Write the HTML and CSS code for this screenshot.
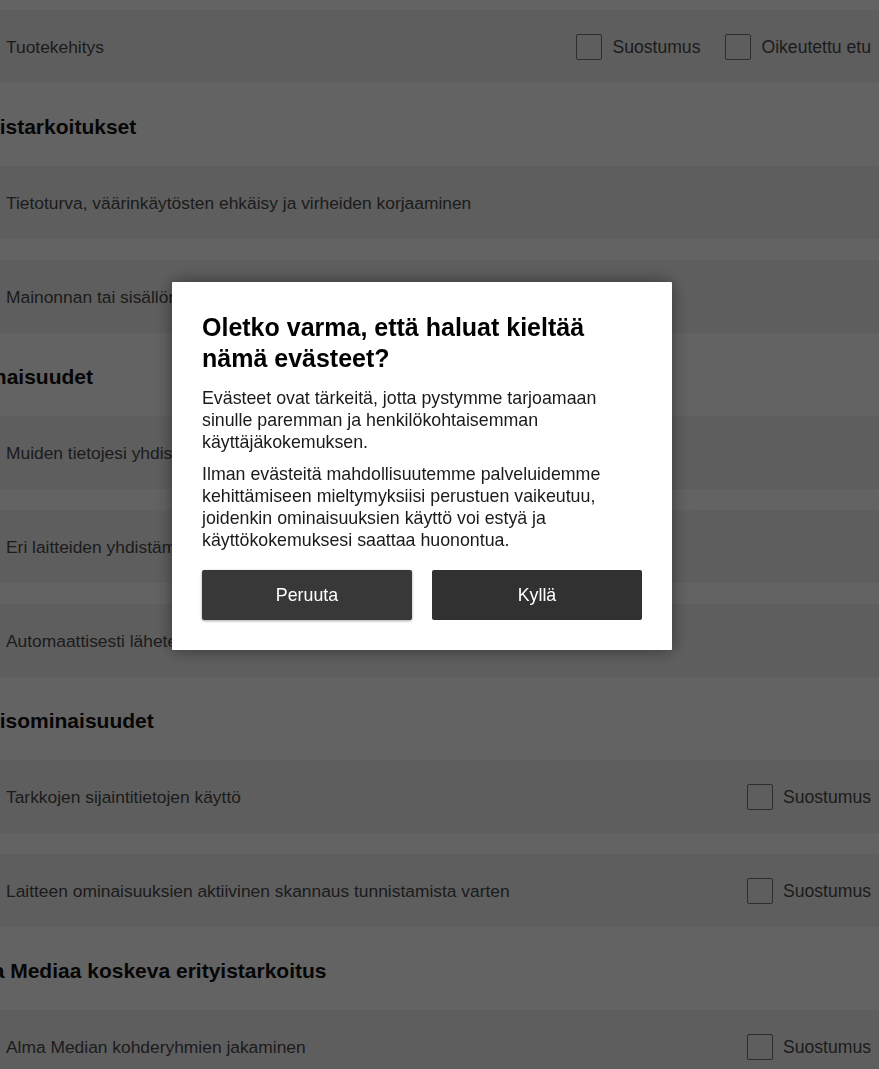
FILE: index.html
```html
<!DOCTYPE html>
<html lang="fi">
<head>
<meta charset="utf-8">
<title>Evästeasetukset</title>
<link rel="stylesheet" href="styles.css">
</head>
<body>
<main class="page">
  <section class="group first">
    <div class="row">
      <span class="row-text">Tuotekehitys</span>
      <div class="choices">
        <label class="choice"><span class="box"></span>Suostumus</label>
        <label class="choice"><span class="box"></span>Oikeutettu etu</label>
      </div>
    </div>
  </section>

  <h2 class="heading">Erityistarkoitukset</h2>
  <section class="group">
    <div class="row"><span class="row-text">Tietoturva, väärinkäytösten ehkäisy ja virheiden korjaaminen</span></div>
    <div class="row"><span class="row-text">Mainonnan tai sisällön teknistä toimittamista ja esittämistä</span></div>
  </section>

  <h2 class="heading">Ominaisuudet</h2>
  <section class="group">
    <div class="row"><span class="row-text">Muiden tietojesi yhdistäminen ja yhteensovittaminen</span></div>
    <div class="row"><span class="row-text">Eri laitteiden yhdistäminen</span></div>
    <div class="row"><span class="row-text">Automaattisesti lähetettyjen laitteen ominaisuuksien tunnistaminen</span></div>
  </section>

  <h2 class="heading">Erityisominaisuudet</h2>
  <section class="group">
    <div class="row">
      <span class="row-text">Tarkkojen sijaintitietojen käyttö</span>
      <div class="choices"><label class="choice"><span class="box"></span>Suostumus</label></div>
    </div>
    <div class="row">
      <span class="row-text">Laitteen ominaisuuksien aktiivinen skannaus tunnistamista varten</span>
      <div class="choices"><label class="choice"><span class="box"></span>Suostumus</label></div>
    </div>
  </section>

  <h2 class="heading">Alma Mediaa koskeva erityistarkoitus</h2>
  <section class="group">
    <div class="row">
      <span class="row-text">Alma Median kohderyhmien jakaminen</span>
      <div class="choices"><label class="choice"><span class="box"></span>Suostumus</label></div>
    </div>
  </section>
</main>

<div class="overlay">
  <div class="dialog" role="dialog">
    <h1 class="dialog-title">Oletko varma, että haluat kieltää nämä evästeet?</h1>
    <p class="dialog-text">Evästeet ovat tärkeitä, jotta pystymme tarjoamaan sinulle paremman ja henkilökohtaisemman käyttäjäkokemuksen.</p>
    <p class="dialog-text">Ilman evästeitä mahdollisuutemme palveluidemme kehittämiseen mieltymyksiisi perustuen vaikeutuu, joidenkin ominaisuuksien käyttö voi estyä ja käyttökokemuksesi saattaa huonontua.</p>
    <div class="dialog-actions">
      <button class="btn btn-cancel">Peruuta</button>
      <button class="btn btn-ok">Kyllä</button>
    </div>
  </div>
</div>
</body>
</html>
```

FILE: styles.css
```css
* { box-sizing: border-box; }

html, body {
  margin: 0;
  padding: 0;
  overflow: hidden;
  height: 100%;
}

body {
  background: #f8f8f8;
  font-family: "Liberation Sans", Arial, sans-serif;
  color: #474747;
}

.page {
  margin-left: -47px;
  padding-top: 10px;
}

.group {
  display: flex;
  flex-direction: column;
  gap: 21px;
}

.row {
  height: 73px;
  background: #ececec;
  display: flex;
  align-items: center;
  justify-content: space-between;
  padding: 1px 8px 0 53px;
  font-size: 17.4px;
  color: #474747;
  white-space: nowrap;
}

.choices {
  display: flex;
  align-items: center;
  gap: 25px;
}

.choice {
  display: flex;
  align-items: center;
  gap: 10px;
  font-size: 17.6px;
}

.box {
  width: 26px;
  height: 26px;
  border: 1.5px solid #707070;
  border-radius: 2px;
  background: #ececec;
}

.heading {
  margin: 0;
  padding: 32px 0 27px;
  font-size: 21px;
  line-height: 24px;
  font-weight: 700;
  color: #101010;
  white-space: nowrap;
}

.overlay {
  position: fixed;
  inset: 0;
  background: rgba(0, 0, 0, 0.6);
  display: flex;
  align-items: flex-start;
  padding: 282px 0 0 172px;
}

.dialog {
  width: 500px;
  background: #fff;
  border-radius: 1px;
  padding: 30px;
  box-shadow: 0 0 18px rgba(0, 0, 0, 0.45);
}

.dialog-title {
  margin: 0 0 13px;
  font-size: 25px;
  line-height: 31px;
  font-weight: 700;
  color: #000;
}

.dialog-text {
  margin: 0 0 10px;
  font-size: 17.8px;
  line-height: 22px;
  color: #1a1a1a;
}

.dialog-actions {
  display: flex;
  gap: 20px;
  margin-top: 19px;
}

.btn {
  flex: 1;
  height: 50px;
  border: none;
  border-radius: 2px;
  font-family: inherit;
  font-size: 17.8px;
  color: #fff;
  cursor: pointer;
}

.btn-cancel {
  background: #383838;
  box-shadow: 0 1px 3px rgba(0, 0, 0, 0.35);
}

.btn-ok {
  background: #313131;
}
```
